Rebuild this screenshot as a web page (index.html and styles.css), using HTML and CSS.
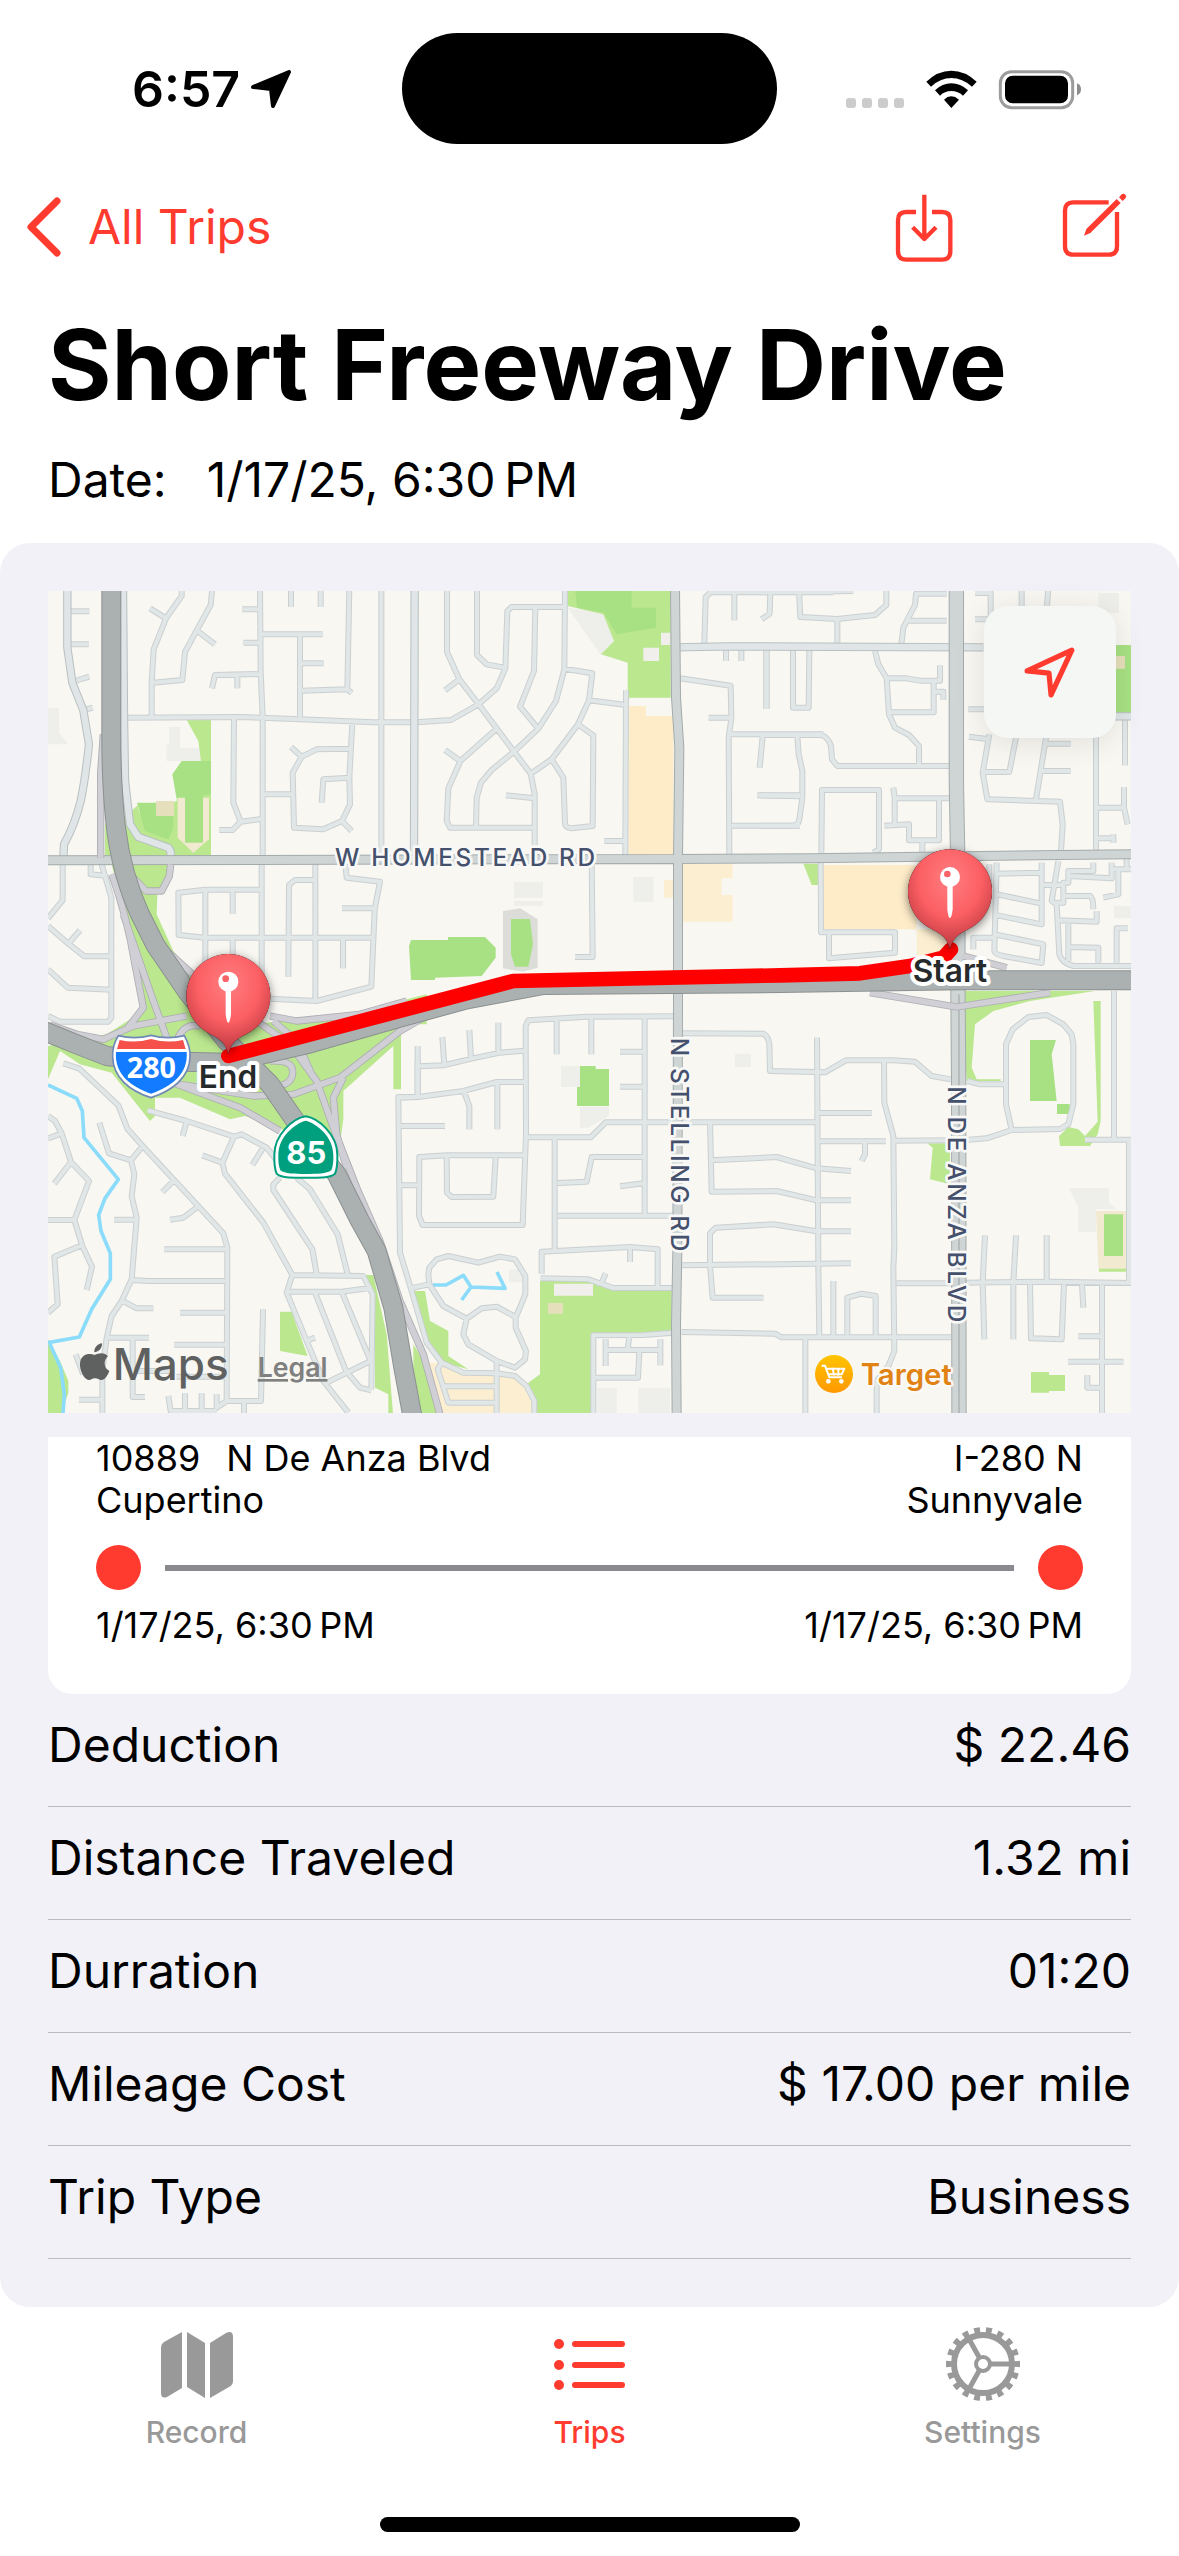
FILE: index.html
```html
<!DOCTYPE html>
<html lang="en">
<head>
<meta charset="utf-8">
<meta name="viewport" content="width=device-width">
<title>Short Freeway Drive</title>
<link rel="stylesheet" href="styles.css">
</head>
<body>
<div class="screen">
  <div class="status">
    <div class="status-left">
      <span>6:57</span>
      <svg class="location" viewBox="0 0 42 40" aria-hidden="true"><path d="M39 3 23 37 21 20 3 18Z"/></svg>
    </div>
    <div class="island"></div>
    <div class="status-right">
      <svg class="signals" viewBox="45 48 711 126" aria-hidden="true">
        <g fill="#ccc"><rect x="48" y="138" width="30" height="30" rx="9"/><rect x="96" y="138" width="30" height="30" rx="9"/><rect x="144" y="138" width="30" height="30" rx="9"/><rect x="192" y="138" width="30" height="30" rx="9"/></g>
        <path d="M289 89Q323 56 364 56T440 89L426 104Q397 78 364 78T303 104ZM315 115Q337 94 364 94T414 115L399 131Q384 117 364 117T330 131ZM342 143Q352 133 364 133T387 143L364 168Z"/>
        <rect x="511" y="59" width="217" height="108" rx="34" fill="none" stroke="#9c9c9c" stroke-width="9"/>
        <rect x="525" y="71" width="189" height="83" rx="23"/>
        <path d="M741 94Q753 99 753 112T741 130Z" fill="#8c8c8c"/>
      </svg>
    </div>
  </div>

  <header>
    <nav class="toolbar" aria-label="Trip">
      <a class="back" href="#trips">
        <svg class="chevron" viewBox="0 0 36 60" aria-hidden="true"><path d="M31 4 5 30 31 56"/></svg>
        <span>All Trips</span>
      </a>
      <div class="actions">
        <button type="button" aria-label="Export trip">
          <svg class="export" viewBox="195 424 174 213" aria-hidden="true"><path d="M258 484H229Q204 484 204 508V602Q204 627 229 627H336Q361 627 361 602V508Q361 484 336 484H306M283 432V564M248 530 283 565 318 530"/></svg>
        </button>
        <button type="button" aria-label="Edit trip">
          <svg class="edit" viewBox="696 424 195 213" aria-hidden="true"><path class="line" d="M836 455H729Q705 455 705 480V587Q705 612 729 612H837Q861 612 861 587V484"/><path d="M762 555 769 535 860 445 872 457 781 547ZM867 440 873 433Q880 426 886 432T885 444L878 451Z"/></svg>
        </button>
      </div>
    </nav>
    <h1>Short Freeway Drive</h1>
    <p class="date"><span>Date:</span><span>1/17/25, 6:30&#8239;PM</span></p>
  </header>

  <main class="panel">
    <section class="map" aria-label="Trip map">
      <svg class="map-art" viewBox="24 30 3249 2466">
        <defs>
          <radialGradient id="ball" cx="0.5" cy="0.3" r="0.75"><stop offset="0" stop-color="#ff7d80"/><stop offset="0.5" stop-color="#fb5f64"/><stop offset="1" stop-color="#ad2f36"/></radialGradient>
          <linearGradient id="poi" x2="0" y2="1"><stop offset="0" stop-color="#ffc400"/><stop offset="1" stop-color="#ff9800"/></linearGradient>
          <g id="pin">
            <path class="pin-shadow" d="M0 0C-12-45-35-48-65-66A126 126 0 1 1 65-66C35-48 12-45 0 0Z"/>
            <path fill="url(#ball)" d="M0 0C-12-45-35-48-65-66A126 126 0 1 1 65-66C35-48 12-45 0 0Z"/>
            <circle cy="-217" r="30" fill="#fff"/><circle cx="-8" cy="-226" r="10" fill="#fa6367"/>
            <path fill="#fff" d="M-8-192H8V-120Q5-95 0-94T-8-120Z"/>
          </g>
          <g id="streets">
            <path d="M425 20V45L378 112 341 205 335 305V405M330 82 378 112M517 20 512 72 470 148 435 213 427 297 340 305M470 148 525 190M660 20 662 270 668 410V830M607 85H660M610 185H660M753 20V78M842 20V78M665 160H848M780 160V408M785 247H851M785 329 922 325 935 336M928 20 922 325M662 279 525 282 516 322M592 282V322M1024 20V830M255 410 600 408 780 415 1000 424H1130M582 410 580 665 602 722 665 714M602 722 578 747H538M937 425 928 590 930 670 906 720 850 745 762 740 758 575 785 527 830 505 930 503M753 498 785 527M928 590 850 595 845 665M668 640H755M906 720 935 750M915 840 920 890 1020 902 1004 985 994 1217 830 1260 690 1253M906 982H1004M665 926H496L415 935 416 1062 496 1070H1004M496 926V1200M578 926V998M578 1070V1130M665 830V1260M826 840V1260M826 897H765L747 912 745 1187M909 1072V1162M68 845V958L24 1012M24 1035 85 1088 133 1126H214M85 1088 120 1048M152 845V880L195 884M185 850 214 950V1226M24 1165 83 1220 214 1226M92 91H148M92 190H146M105 300 148 287M130 388 158 380"/>
            <g transform="translate(1080 0)"><path d="M141 20V213L178 295 236 370 342 512 392 578 404 640V830M231 20V222L260 250 313 260M495 78H335L322 90 316 262 290 322 236 370 153 417 50 424M178 295 135 328M406 78 402 270 360 377 415 443M495 20 493 265 468 360 415 443 342 512 275 567 243 605 230 650 228 740M493 263 577 277 567 358 534 430 455 535 392 578M567 358 678 372M534 430 580 463 578 735 515 742Q497 740 495 728L490 590 455 535M290 443 181 540 145 622 140 720 150 740H404M135 507 181 540M318 643 404 652M678 328 676 825M613 780H676M575 840 578 1128H525M1003 30V118M913 190 917 48 932 34H1300M1111 30 1109 98 1085 115M978 200V240M1024 200V240M1099 200V383M840 292 992 314 994 412 986 470 988 825M926 410H994M990 460H1270M1088 465 1079 560M1072 643H1200M994 734H1200"/></g>
            <g transform="translate(2160 0)"><path d="M0 34 280 30M117 30 121 108 232 114 345 102 379 72V20M232 114V188M560 38H468L465 72 430 140 424 190M440 119H560M20 205V383M99 205V380H146L148 205M345 210 355 250 380 292 387 400 405 440 447 462 477 495V550M380 292H440L480 299H540V253M521 299V394H387M521 332H550V356M0 462H185Q205 470 213 495L216 535 232 555H573M112 465 116 520 127 570V650L118 715Q115 735 95 734H0M0 643 120 646M184 815 186 627H357V805L340 815M400 620 404 652H573M404 652V730M373 734 447 730V778H537V655M487 780V815M645 36H692V120M645 115H692M785 20V90M865 20 860 90M625 385H680M627 467 688 475M688 460 668 575 682 655 900 662 908 730 903 810M768 470 748 573H670M858 470 828 655M860 488H932M840 570H932M1008 460V810M1095 415V553M1092 618V680L1103 730M1010 680H1092M1010 772H1062M1060 760V785M182 845 183 1054H405V1115L207 1132V1060M710 845 703 1110Q705 1120 730 1125L845 1146 850 1090 705 1060M710 878 845 875M845 845V1030L712 1003M712 940 845 968M845 912H912M895 840 875 960 890 970 898 1120Q905 1145 940 1155H1113M1000 845V870H925V905H910V965H890M925 885 1055 892V845M1060 865H1113M1075 860V940L1030 950M910 945H990Q1000 950 1000 985M895 1018 1010 1022V990M925 1030V1140M930 1098 1015 1100V1145M1070 1145V1042H1103M640 1105V1070H700M1100 830V865M688 850V920"/></g>
            <g transform="translate(0 1260)"><path d="M24 45 60 62H205L214 50V-40M70 187 118 203 235 313 262 383 308 435 550 697 562 740 560 1200M178 365 207 457 273 478 308 435M273 478 283 520 275 585 290 650 275 835 245 900 215 945 200 1010 187 1110V1240M222 656H290M275 837 325 840H555M373 745H560M420 935H560M403 1031H560M410 1127H560M200 1010H327M278 1015V1188H315M278 1110H400M245 898 290 922H340M24 345 45 360 65 397 93 483 147 540 103 657 127 735 156 797 140 867M24 412 65 397M93 483 43 548M24 657H103M127 732 43 767 53 910 24 935M400 540 367 573M470 620 430 650 390 656M323 328 440 360 582 407 605 400 680 440 720 490M440 360 428 405M582 407 547 485 487 463M547 485 555 518 670 665 757 822 970 825 998 880 994 1165M668 443 637 492M720 530 700 550V567L817 745 830 820M770 530 810 565 893 700 923 820M757 822 740 875 798 1015 850 1140 925 1235M740 872H905L995 860M825 875 918 1110 960 1160 994 1168M905 872 992 1080 860 1145M798 1020 825 1010M669 925 663 1200H560L530 1220V1180M612 1200V1240M385 1185 392 1230H530M435 1177V1230M485 1177V1230M117 1196H187M107 1060 130 1120M1133 180V288M1133 288H1075L1080 755 1112 860 1160 1025 1205 1085 1270 1115 1370 1117 1425 1125 1460 1155 1483 1200V1240M1080 375H1215M1080 553H1135"/></g>
            <g transform="translate(1080 1260)"><path d="M0 290 55 288 190 270 290 243H375M53 135V288M58 196 130 193 215 173 300 155 372 149M127 108 133 193M208 87 213 175M295 65V155M820 46 560 47 385 58 377 75 378 400 368 672H68L57 645 58 468 140 463H372M470 50V160M574 50V160M734 50V640M660 152H734M660 257H734M384 409H572L617 364H1250M192 272 208 315V385M292 245V385M140 465 141 575 155 588 280 587 287 470M464 410V748M472 546 560 542 575 468H734M660 556 730 547M472 644H820M425 818V752L690 738 773 745V860M690 740V783M422 832 565 835 640 861H820M605 845 617 817M842 97 1090 98Q1105 105 1108 130L1110 210 1275 214 1338 178H1480L1545 182 1595 225 1653 235M930 365 935 572 1130 570 1250 598H1353M935 478 1130 468 1250 502 1353 510M842 793 1353 787M1090 890H938L930 793V697L947 680 1120 670 1250 691H1353M845 993 1125 998 1145 1009H1653M580 1240V1003L730 1002 820 995M617 1015V1095M617 1047H780M781 1015V1093M688 1005 683 1045M718 1050 714 1130H585M30 862 88 850 85 820 88 800 110 775 145 765 235 785 300 767 345 775 376 825V880L347 950V980L378 1050 375 1075 345 1100 290 1080 205 1030 190 1000 200 953 245 922 290 917 345 947M200 953 130 915 88 850M290 1080V1240M125 1085 113 1105 145 1205H285M130 1156H285"/></g>
            <g transform="translate(2160 1260)"><path d="M171 110 175 800 178 1005M372 178 373 305 400 405 403 740 400 800 403 1050 385 1095 350 1140V1240M175 336H335M175 421H378M400 419 580 418M315 425V460L305 480M220 840V1003M262 1003V890L305 878 347 885V1003M136 1010V1240M410 847H580M610 845 870 842 1113 846M610 418 680 412 755 387 900 384 925 370 940 310V130L935 100 910 70 860 42 805 48 758 85 738 130V310L755 387M622 240 660 250H738M1062-30V415M975 416H1113M1107 416V846M675 703 668 845 673 1015M768 703 760 845V1015M860 703V845M810 850 813 1012 905 1015 912 850M966 850 970 920M1026 850V1240M955 1006H1026M924 1082H1090M982 1122V1160H1026"/></g>
          </g>
          <path id="collectors" d="M82 20V200L97 305 130 388 147 490Q135 600 122 660 105 730 72 790L70 835M249 20 252 410 255 600 270 730 295 768 385 800 392 812V850M1124 20 1122 830M1910 199 2060 196 2830 199M3220 406H3280"/>
          <path id="arterials" d="M0 838 1900 834 2310 832 3060 822 3280 820M1905 20 1908 350 1918 500 1914 834V1260L1912 2010 1908 2230 1910 2510"/>
          <path id="deanza" d="M2749 20V600L2753 820 2754 1260 2756 1500 2757 2510"/>
          <g id="ramps">
            <path d="M190 460 182 580V830M392 850 388 885 365 930H318L280 890M215 880Q260 1000 285 1150L310 1280 260 1345M250 1000 340 1260 380 1370M370 1100 480 1200M30 1332 110 1360 190 1375 280 1335 440 1305M410 1380Q430 1325 480 1335M420 1510 640 1545 760 1540 900 1490 1080 1350 1150 1310M330 1480 600 1580 720 1650M650 1320 750 1390 830 1500 880 1640 950 1820 1020 1980 1080 2160 1150 2320 1200 2500M700 1320 770 1380 820 1490M690 1440Q760 1435 758 1475T700 1515M910 1490 880 1550 890 1660 920 1760M690 1305 770 1320 960 1300 1100 1260M2770 1125 2900 1160M2490 1235 2750 1278 3030 1235"/>
          </g>
          <path id="freeways" d="M214 20V500Q216 640 228 740 245 880 300 1000L345 1090 440 1230 560 1380 690 1510 780 1640 890 1780 960 1920 1010 2010 1060 2180 1090 2360 1118 2510M0 1345 110 1390 200 1425 330 1440 560 1445 800 1390 1080 1310 1280 1255 1510 1212 2220 1206 2760 1198H3280"/>
        </defs>

        <rect width="3300" height="2520" fill="#f8f7f2"/>
        <g class="built">
          <path d="M24 380H57V455L85 490H24ZM387 438H420V500H483V540H378V490H387ZM1583 80 1690 95 1722 150V180L1683 222 1660 190ZM1422 903H1509V950H1422ZM1422 960H1509V974H1422ZM1780 888H1840V963H1780ZM3175 36H3237V96H3175ZM1563 1455H1620V1518H1563ZM1620 1578H1707V1605L1645 1640H1620ZM2085 1418H2133V1458H2085ZM1407 2065H1447V2103H1407ZM3087 1821H3207V1865L3230 1885H3168V1953H3115V1880ZM3222 975H3273V1012H3222ZM1672 2420H1730V2500H1672ZM1795 2420H1890V2500H1795Z"/>
        </g>
        <g class="grass">
          <path d="M440 417H513V825H195V730L250 740 270 600 300 700 410 660 425 540H483L475 480ZM215 850H395L370 935H320L352 942 350 1000 400 1110 460 1180 640 1330 960 1290 1160 1240V1330H1083V1525H1060V1395L910 1530V1615L890 1760 720 1640 615 1605 570 1615 420 1550 345 1550V1605L330 1620 215 1475 120 1450 60 1410 24 1495V1395L200 1360 310 1290 250 1000ZM24 2275 60 2340 85 2400V2435L60 2510H24ZM720 2192H755L803 2325 720 2310ZM972 2082H1000L1040 2260 1060 2510H1045V2440L1005 2420V2140ZM1118 2130H1155L1170 2220 1225 2250V2325L1285 2365 1210 2345 1140 2250ZM1120 2290 1170 2370 1210 2500H1120ZM1500 2100H1650L1720 2122H1895V2250L1660 2263V2500H1485L1465 2405 1500 2380ZM1583 20H1892V350H1763V245L1683 220 1722 180 1690 100 1583 75ZM2290 848H2335V912H2315ZM2765 1230H3165L2970 1260 2860 1290 2805 1330 2795 1460 2810 1495H2882V1500H2780ZM3160 1260H3182V1620L3173 1660 3150 1695H3060L3057 1665 3085 1638 3115 1645 3135 1665 3173 1622ZM2662 1687H2730V1810L2670 1795 2678 1700ZM2973 2373H3027V2382H3075V2430H3027V2435H2973ZM3177 2050H3262V2072H3177Z"/>
        </g>
        <path fill="#f8f7f2" d="M262 430H380V540H425L400 580 410 655 300 665 275 690 266 600Z"/>
        <g class="field">
          <path d="M425 540H513V640L410 655 397 580ZM291 665H400V740L385 775 315 750ZM1605 20H1775V80H1848V140L1730 160 1690 95 1611 80ZM1107 1095 1113 1077H1224V1068H1335L1367 1100V1130L1325 1185 1185 1190V1197H1113ZM3228 192H3273V395H3228ZM1620 1455H1667V1464H1707V1575H1611V1518H1620ZM2970 1377H3048L3035 1420 3050 1560H2970ZM3051 1569H3089V1599H3051Z"/>
        </g>
        <path fill="#e6dfbb" d="M348 660H402V705H348ZM3228 225H3255V263H3228ZM1524 2166H1569V2198H1524Z"/>
        <path fill="#f2e9d1" d="M413 650H507V775L460 815 413 770ZM3168 1890H3262V2063H3175Z"/>
        <path fill="#dcdcd8" d="M1389 990 1440 982 1493 1015V1160L1450 1172 1389 1162Z"/>
        <path class="field" d="M435 640H489V785H435ZM1413 1014H1470L1479 1090 1465 1157H1425L1413 1120ZM3192 1900H3249V2025H3192Z"/>
        <path fill="#feecc9" d="M1765 375H1818V405H1900V822H1765ZM2348 852H2630V1045H2348Z"/>
        <path fill="#fcefd1" d="M1928 848H2078V892H2045V942H2078V1022H1928ZM2630 1045H2750V1130H2630ZM1872 897H1900V950H1872ZM1160 2345H1205L1270 2375 1370 2377 1425 2385 1480 2440V2500H1200L1155 2370Z"/>
        <path fill="#f0efeb" d="M1810 200H1857V240H1810ZM1863 155H1892V192H1863ZM1542 2108H1659V2144H1542Z"/>
        <path class="water" d="M24 1512 110 1552 127 1590 132 1670 235 1795 195 1852 176 1902 183 1950 211 2017V2095L155 2185 118 2268 24 2285M30 2290 62 2360 73 2440 68 2510M1177 2112H1218L1270 2083 1293 2118 1395 2122 1371 2073M1293 2118 1265 2157"/>

        <g class="roads">
          <use href="#streets" stroke="#cad0d2" stroke-width="18"/>
          <use href="#streets" stroke="#e1e6e7" stroke-width="12"/>
          <use href="#collectors" stroke="#b9c0c1" stroke-width="25"/>
          <use href="#collectors" stroke="#e0e6e7" stroke-width="19"/>
          <use href="#arterials" stroke="#a4abab" stroke-width="30"/>
          <use href="#deanza" stroke="#a4abab" stroke-width="46"/>
          <use href="#arterials" stroke="#cfd5d5" stroke-width="24"/>
          <use href="#deanza" stroke="#cfd5d5" stroke-width="40"/>
          <path d="M2757 1240V2510" stroke="#a9afaf" stroke-width="4"/>
          <use href="#ramps" stroke="#adadb2" stroke-width="22"/>
          <use href="#ramps" stroke="#cfcfd5" stroke-width="17"/>
          <use href="#freeways" stroke="#8b9090" stroke-width="60"/>
          <use href="#freeways" stroke="#abb1b1" stroke-width="54"/>
        </g>
        <path class="route" d="M565 1425 1420 1200 2220 1183 2460 1177 2610 1155 2710 1130 2733 1105"/>

        <g class="road-name">
          <text x="885" y="856">W HOMESTEAD RD</text>
          <text transform="translate(1893 1370) rotate(90)">N STELLING RD</text>
          <text transform="translate(2723 1516) rotate(90)">N DE ANZA BLVD</text>
        </g>

        <path fill="#fff" stroke="#6f88b5" stroke-width="5" d="M235 1364Q285 1376 333 1363 382 1376 433 1364 452 1398 450 1428C449 1490 395 1530 333 1550 270 1530 219 1490 218 1428Q216 1395 235 1364Z"/>
        <path fill="#f55049" d="M239 1377Q285 1388 333 1374 382 1388 429 1377L437 1404H231Z"/>
        <path fill="#127bff" d="M228 1413H440C445 1475 400 1515 333 1538 266 1515 223 1475 228 1413Z"/>
        <text class="shield-text" x="334" y="1492">280</text>
        <path fill="#fff" stroke="#00a07e" stroke-width="6" d="M797 1606C835 1612 892 1660 892 1722Q893 1760 885 1778C870 1792 835 1790 797 1790S725 1792 710 1778Q702 1760 703 1722C703 1660 760 1612 797 1606Z"/>
        <path fill="#00a07e" d="M797 1619C830 1627 880 1667 880 1722Q881 1752 874 1768C860 1779 830 1779 797 1779S735 1779 721 1768Q714 1752 715 1722C715 1667 765 1627 797 1619Z"/>
        <text class="shield-text wide" x="799" y="1748">85</text>

        <g class="place">
          <circle cx="2382" cy="2379" r="57" fill="url(#poi)"/>
          <path class="cart" d="M2345 2354H2355L2368 2389H2406M2359 2363H2413L2405 2380H2366M2378 2360 2382 2384M2395 2360V2384"/>
          <circle cx="2365" cy="2401" r="7" fill="#fff"/><circle cx="2404" cy="2401" r="7" fill="#fff"/>
          <text x="2462" y="2412">Target</text>
        </g>

        <use href="#pin" x="565" y="1419"/>
        <use href="#pin" x="2730" y="1105"/>
        <text class="stop" x="564" y="1521">End</text>
        <text class="stop" x="2730" y="1203">Start</text>

        <g class="brand">
          <path d="M163 2322C150 2316 124 2316 120 2346 118 2366 132 2397 147 2397 155 2397 156 2392 165 2392S176 2397 184 2397C195 2397 204 2382 208 2370 190 2361 190 2337 204 2326 194 2313 178 2315 163 2322ZM163 2314C162 2301 173 2288 186 2287 187 2301 177 2313 163 2314Z"/>
          <text x="218" y="2398">Maps</text>
          <a href="#legal"><text class="legal" x="653" y="2388">Legal</text></a>
        </g>
      </svg>
      <button class="recenter" type="button" aria-label="Center on location">
        <svg viewBox="0 0 50 50" aria-hidden="true"><path d="M46 4 26 47 24 26 3 24Z"/></svg>
      </button>
    </section>

    <section class="leg" aria-label="Start and end">
      <div class="pair">
        <div><div class="street"><span>10889</span><span>N De Anza Blvd</span></div><div>Cupertino</div></div>
        <div class="end"><div>I-280 N</div><div>Sunnyvale</div></div>
      </div>
      <div class="track"><i class="dot"></i><i class="bar"></i><i class="dot"></i></div>
      <div class="pair"><span>1/17/25, 6:30&#8239;PM</span><span>1/17/25, 6:30&#8239;PM</span></div>
    </section>

    <dl class="facts">
      <div><dt>Deduction</dt><dd>$ 22.46</dd></div>
      <div><dt>Distance Traveled</dt><dd>1.32 mi</dd></div>
      <div><dt>Durration</dt><dd>01:20</dd></div>
      <div><dt>Mileage Cost</dt><dd>$ 17.00 per mile</dd></div>
      <div><dt>Trip Type</dt><dd>Business</dd></div>
    </dl>
  </main>

  <nav class="tabs" aria-label="Main">
    <a href="#record">
      <svg viewBox="0 0 78 78" aria-hidden="true"><path fill="currentColor" d="M3 23Q3 19 6 17L24 7V63L9 72Q3 74 3 68ZM29 7 47 18V73L29 62ZM52 18 68 8Q75 5 75 12V56Q75 60 71 62L52 73Z"/></svg>
      <span>Record</span>
    </a>
    <a class="active" href="#trips" aria-current="page">
      <svg viewBox="0 0 78 78" aria-hidden="true"><g fill="currentColor"><circle cx="8" cy="19" r="5"/><circle cx="8" cy="40" r="5"/><circle cx="8" cy="60" r="5"/></g><path stroke="currentColor" stroke-width="6" stroke-linecap="round" d="M24 19H71M24 40H71M24 60H71"/></svg>
      <span>Trips</span>
    </a>
    <a href="#settings">
      <svg viewBox="0 0 78 78" aria-hidden="true"><g fill="none" stroke="currentColor"><circle cx="39" cy="39" r="29" stroke-width="6"/><circle cx="39" cy="39" r="34" stroke-width="6" pathLength="36" stroke-dasharray="1 1" stroke-dashoffset="0.5"/><circle cx="39" cy="39" r="7" stroke-width="4"/><path stroke-width="5" d="M47 39H67M35 32 25 14M35 46 25 64"/></g></svg>
      <span>Settings</span>
    </a>
  </nav>
  <div class="home"></div>
</div>
</body>
</html>
```
FILE: styles.css
```css
* { box-sizing: border-box; }

body {
  margin: 0;
  background: #fff;
  color: #000;
  font-family: Inter, "Liberation Sans", sans-serif;
  font-size: 48px;
  line-height: 62px;
}

svg { display: block; }
h1, p, dl, dd { margin: 0; }
a { color: inherit; text-decoration: none; }
button {
  padding: 0;
  border: 0;
  background: none;
  color: inherit;
}

.screen { display: flex; flex-direction: column; }

.status {
  display: grid;
  grid-template-columns: 1fr 375px 1fr;
  align-items: center;
  height: 177px;
  font-size: 50px;
  font-weight: 600;
}
.status-left { display: flex; align-items: center; gap: 10px; padding-left: 132px; }
.location { width: 42px; height: 40px; stroke: #000; stroke-width: 4px; stroke-linejoin: round; }
.island { height: 111px; border-radius: 56px; background: #000; }
.status-right { display: flex; justify-content: flex-end; padding-right: 97px; }
.signals { width: 237px; height: 42px; }

.toolbar {
  display: flex;
  align-items: center;
  justify-content: space-between;
  height: 100px;
  padding: 0 52px 0 26px;
  color: #ff3b30;
}
.back { display: flex; align-items: center; gap: 26px; }
.chevron { width: 36px; height: 60px; fill: none; stroke: currentColor; stroke-width: 7px; stroke-linecap: round; stroke-linejoin: round; }
.actions { display: flex; gap: 109px; }
.export { width: 58px; height: 71px; fill: none; stroke: currentColor; stroke-width: 13px; stroke-linejoin: round; }
.edit { width: 65px; height: 71px; fill: currentColor; }
.edit .line { fill: none; stroke: currentColor; stroke-width: 13px; }

h1 {
  padding: 28px 48px 0;
  font-size: 97px;
  font-weight: 700;
  line-height: 120px;
}
.date { display: flex; gap: 40px; padding: 24px 48px 32px; }

.panel {
  padding: 48px;
  border-radius: 30px;
  background: #f2f1f7;
}

.map { position: relative; margin-bottom: 24px; }
.map-art { width: 100%; height: auto; }
.built { fill: #eeeeea; }
.grass { fill: #bbe78f; }
.field { fill: #a8e184; }
.water { fill: none; stroke: #8bdcfa; stroke-width: 11px; stroke-linejoin: round; }
.roads { fill: none; stroke-linejoin: round; }
.route { fill: none; stroke: #f00; stroke-width: 44px; stroke-linecap: round; stroke-linejoin: round; }
.pin-shadow { fill: #000; filter: drop-shadow(0 8px 14px rgb(0 0 0 / 50%)); }
.map text { paint-order: stroke; stroke-linejoin: round; }
.road-name { fill: #44506c; font-size: 73px; font-weight: 500; letter-spacing: 8px; stroke: #f8f8f6; stroke-width: 16px; }
.shield-text { fill: #fff; font-family: "Noto Sans", sans-serif; font-size: 86px; font-weight: 700; text-anchor: middle; }
.shield-text.wide { font-family: Inter, sans-serif; font-size: 93px; }
.place text { fill: #e08214; font-size: 88px; font-weight: 600; stroke: #fbfaf6; stroke-width: 12px; }
.cart { fill: none; stroke: #fff; stroke-width: 6px; stroke-linejoin: round; }
.stop { fill: #262a2b; font-size: 95px; font-weight: 600; text-anchor: middle; stroke: #fff; stroke-width: 24px; }
.brand { fill: #5f6161; font-size: 132px; font-weight: 500; }
.legal { fill: #808080; font-size: 80px; font-weight: 600; text-decoration: underline; }
.recenter {
  position: absolute;
  top: 15px;
  right: 15px;
  display: grid;
  place-items: center;
  width: 132px;
  height: 132px;
  border-radius: 24px;
  background: #f5f7f4;
  box-shadow: 0 4px 30px rgb(0 0 0 / 10%);
  color: #ff3b30;
}
.recenter svg { width: 52px; height: 52px; fill: none; stroke: currentColor; stroke-width: 5px; stroke-linejoin: round; }

.leg {
  display: flex;
  flex-direction: column;
  padding: 0 48px 48px;
  border-radius: 0 0 24px 24px;
  background: #fff;
  font-size: 36px;
  line-height: 42px;
}
.pair { display: flex; justify-content: space-between; }
.street { display: flex; gap: 26px; }
.end { text-align: right; }
.track { display: flex; align-items: center; gap: 24px; padding: 24px 0 14px; }
.dot { width: 45px; height: 45px; border-radius: 50%; background: #ff3b30; }
.bar { flex: 1; height: 6px; background: #8a898e; }

.facts div {
  display: flex;
  justify-content: space-between;
  padding: 20px 0 30px;
  border-bottom: 1px solid #bcbbc1;
}

.tabs {
  display: grid;
  grid-template-columns: repeat(3, 1fr);
  padding-top: 18px;
  color: #999;
  font-size: 30px;
  font-weight: 500;
  line-height: 36px;
}
.tabs a { display: flex; flex-direction: column; align-items: center; gap: 11px; }
.tabs svg { width: 78px; height: 78px; }
.tabs .active { color: #ff3b30; }

.home {
  align-self: center;
  width: 420px;
  height: 15px;
  margin: 67px 0 24px;
  border-radius: 8px;
  background: #000;
}
```
